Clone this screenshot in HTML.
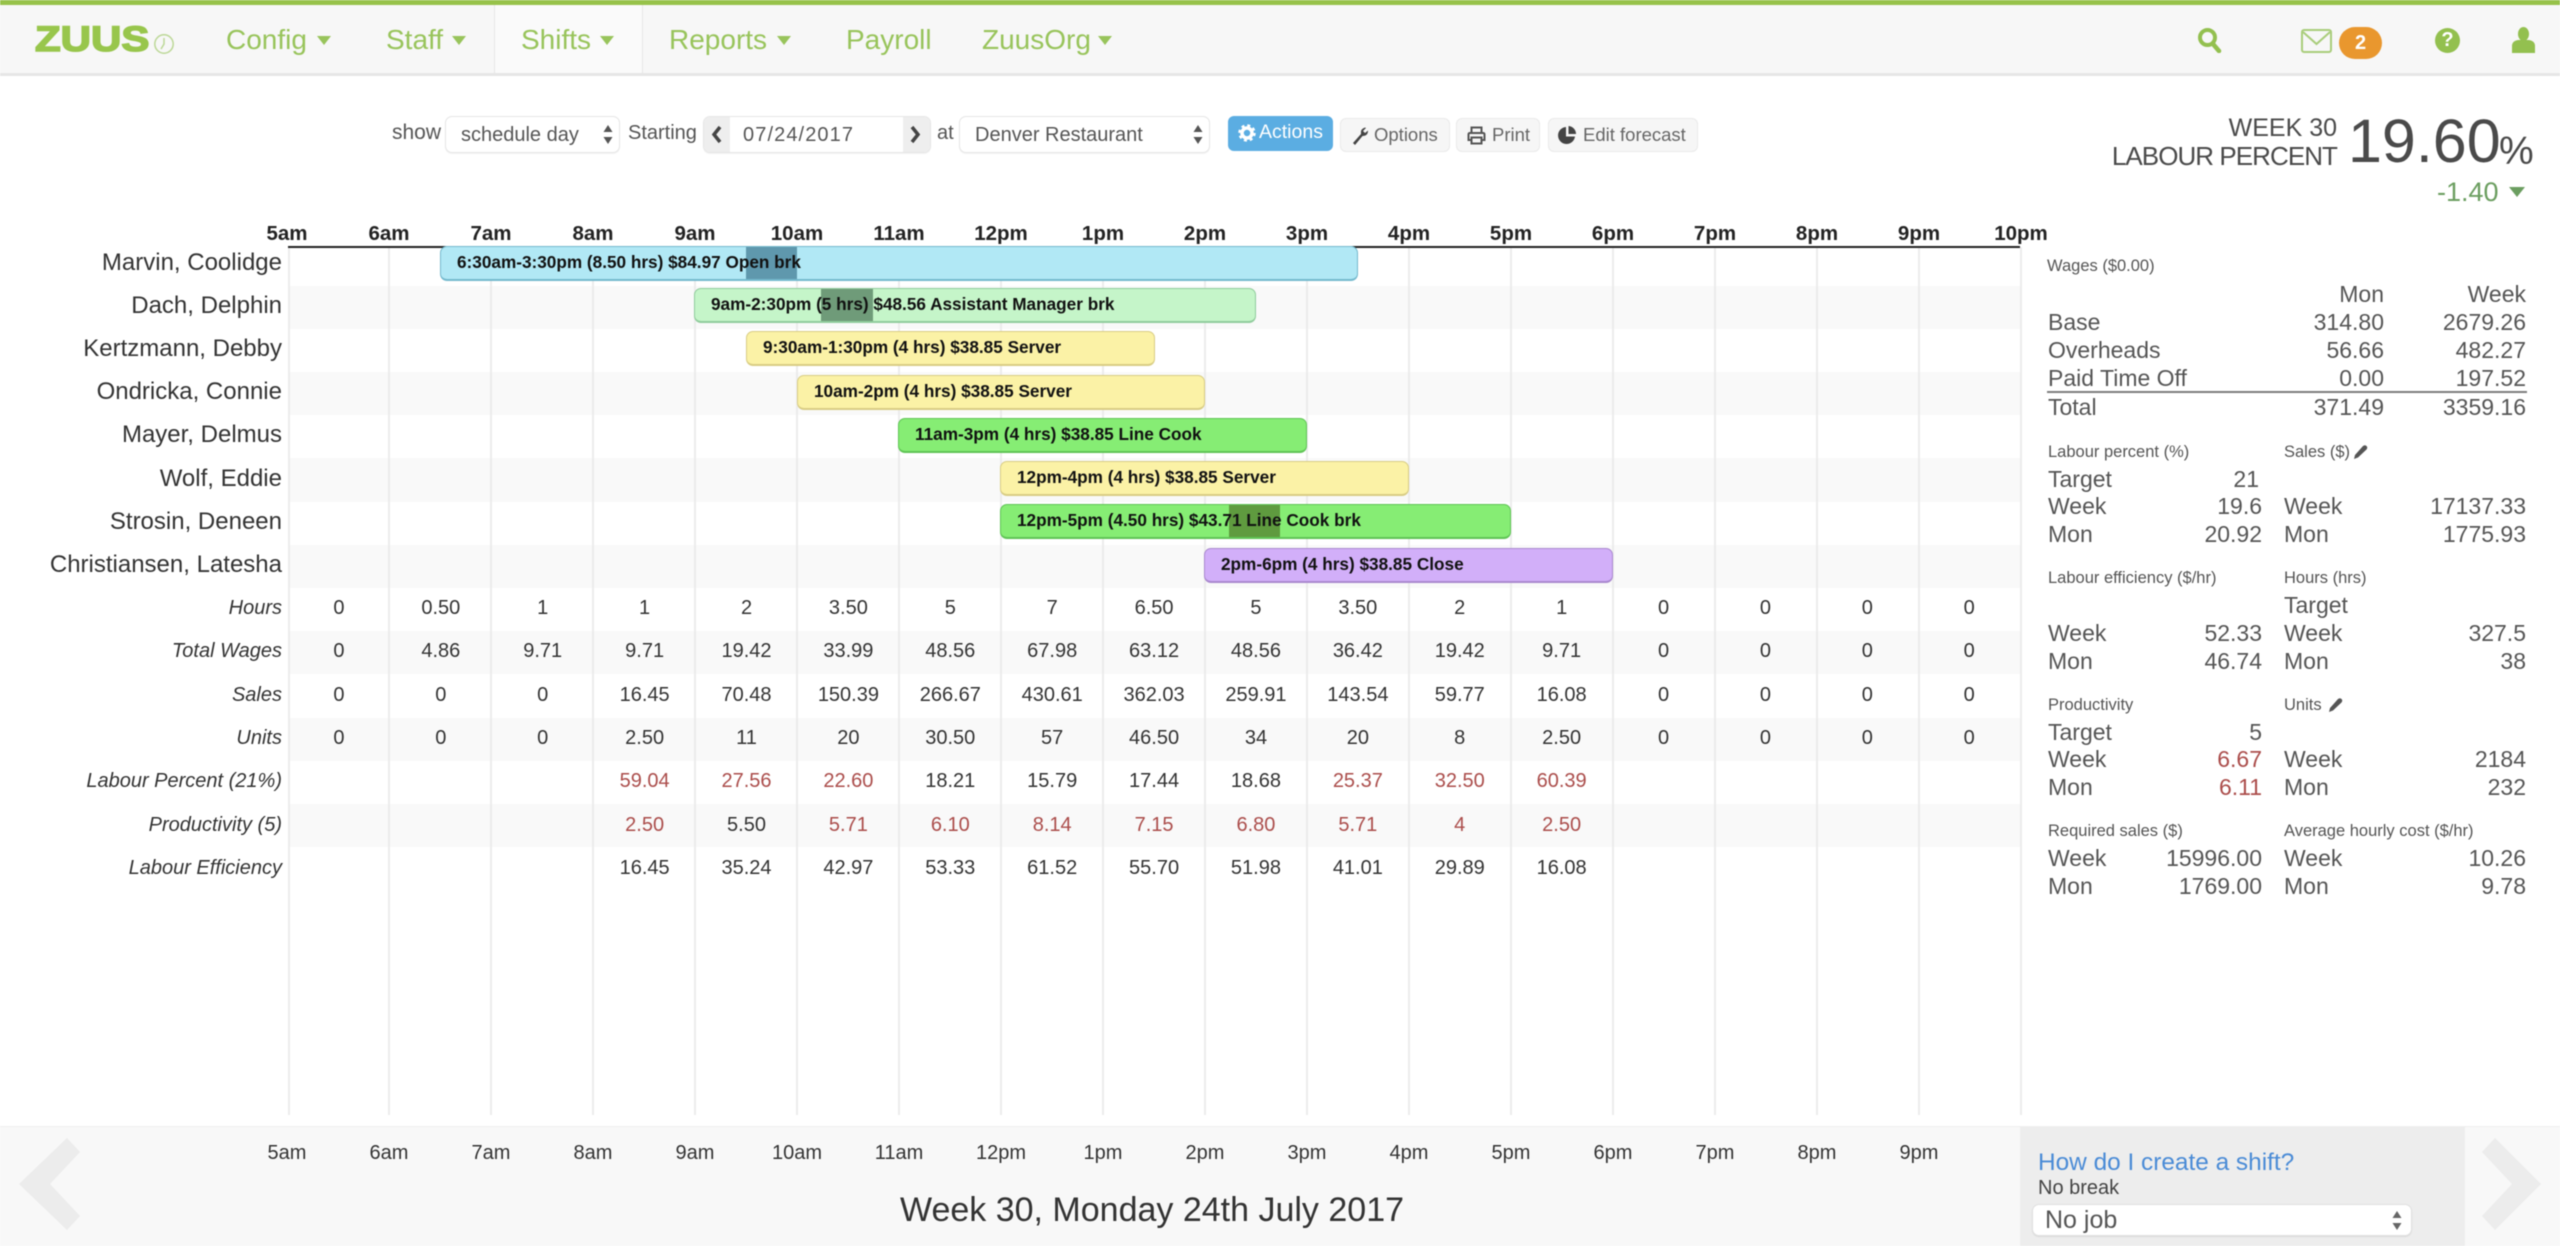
<!DOCTYPE html>
<html lang="en"><head><meta charset="utf-8"><title>Zuus Shifts</title>
<style>
*{box-sizing:border-box}
html,body{margin:0;padding:0;background:#fff}
body{width:2560px;height:1246px;overflow:hidden;position:relative;font-family:"Liberation Sans",Arial,sans-serif;color:#444;filter:blur(.5px)}
.t,.a{position:absolute;white-space:nowrap}
.t{line-height:1}
.r{text-align:right}
.c{text-align:center}
.nav{font-size:28px;color:#98c45b;top:26px}
.car{position:absolute;width:0;height:0;border-left:7.5px solid transparent;border-right:7.5px solid transparent;border-top:9px solid #98c45b;top:36px}
.box{position:absolute;background:#fff;border:1.5px solid #e6e6e6;border-radius:7px;box-shadow:0 1px 1px rgba(0,0,0,.05)}
.fs{font-size:20px;color:#555;top:123px}
.btn{position:absolute;top:118px;height:34px;background:#f6f6f6;border:1.5px solid #eaeaea;border-radius:6px;font-size:18.5px;color:#666;line-height:31px;white-space:nowrap}
.tm{position:absolute;top:224px;width:80px;margin-left:-40px;text-align:center;font-weight:bold;font-size:20.5px;line-height:20px;color:#222}
.ft{position:absolute;top:1143px;width:80px;margin-left:-40px;text-align:center;font-size:20px;line-height:20px;color:#333}
.st{position:absolute;left:288px;width:1733px;height:43.2px;background:#f9f9f9}
.g{position:absolute;top:247px;width:2px;height:868px;background:#ececec}
.n{position:absolute;left:0;width:282px;text-align:right;font-size:24px;line-height:24px;color:#333;white-space:nowrap}
.l{position:absolute;left:0;width:282px;text-align:right;font-size:20px;line-height:20px;font-style:italic;color:#333;white-space:nowrap}
.vals{position:absolute;left:288px;display:flex;font-size:20px;line-height:20px;color:#333}
.vals span{flex:0 0 101.9px;text-align:center;display:block}
.red{color:#ab4d4b!important}
.bar{position:absolute;height:35px;border-radius:7px;border:1.5px solid;border-bottom-width:2.5px;overflow:hidden;font-weight:bold;font-size:17.2px;line-height:31px;color:#111;padding-left:16px;white-space:nowrap}
.bar i{position:absolute;top:-2px;bottom:-3px;display:block}
.bar b{position:relative;font-weight:bold}
.blue{background:#b1e8f5;border-color:#74b9cd}
.lg{background:#c5f5c9;border-color:#90cc9c}
.yl{background:#fbf2a6;border-color:#d9cd84}
.gr{background:#86ed74;border-color:#5fc455}
.pu{background:#d2aff9;border-color:#a988ce}
.h{font-size:16.5px;color:#555;line-height:16px}
.p{font-size:23px;line-height:23px;color:#555}
</style></head><body>

<!-- top nav -->
<div class="a" style="left:0;top:0;width:2560px;height:5px;background:#97c24a"></div>
<div class="a" style="left:0;top:5px;width:2560px;height:68px;background:#f7f7f7"></div>
<div class="a" style="left:0;top:73px;width:2560px;height:3px;background:#e6e6e6"></div>
<div class="a" style="left:494px;top:5px;width:149px;height:68px;background:#fafafa;border-left:1.5px solid #e6e6e6;border-right:1.5px solid #e6e6e6"></div>

<div class="t" style="left:35px;top:22px;font-size:35px;font-weight:bold;color:#98c64c;transform:scaleX(1.2);transform-origin:left top;-webkit-text-stroke:1.5px #98c64c;letter-spacing:0">ZUUS</div>
<svg class="a" style="left:153px;top:33px" width="22" height="22" viewBox="0 0 22 22"><circle cx="11" cy="11" r="9.2" fill="none" stroke="#bcd897" stroke-width="1.5"/><path d="M11 5v6l-3 5" fill="none" stroke="#bcd897" stroke-width="1.5"/></svg>

<div class="t nav" style="left:226px">Config</div><div class="car" style="left:317px"></div>
<div class="t nav" style="left:386px">Staff</div><div class="car" style="left:452px"></div>
<div class="t nav" style="left:521px">Shifts</div><div class="car" style="left:600px"></div>
<div class="t nav" style="left:669px">Reports</div><div class="car" style="left:777px"></div>
<div class="t nav" style="left:846px">Payroll</div>
<div class="t nav" style="left:982px">ZuusOrg</div><div class="car" style="left:1098px"></div>

<svg class="a" style="left:2197px;top:27px" width="25" height="26" viewBox="0 0 25 26"><circle cx="10.5" cy="10.5" r="7.5" fill="none" stroke="#93c04f" stroke-width="4"/><path d="M16 17l6 7" stroke="#93c04f" stroke-width="4.5" stroke-linecap="round"/></svg>
<svg class="a" style="left:2301px;top:29px" width="31" height="24" viewBox="0 0 31 24"><rect x="1" y="1" width="29" height="22" rx="2" fill="#f7f7f7" stroke="#a9cd7b" stroke-width="2"/><path d="M2 3l13.500 12L29 3" fill="none" stroke="#a9cd7b" stroke-width="2"/></svg>
<div class="a" style="left:2339px;top:27px;width:43px;height:32px;border-radius:16px;background:#e9972e;color:#fff;font-weight:bold;font-size:20px;line-height:32px;text-align:center">2</div>
<div class="a" style="left:2435px;top:28px;width:25px;height:25px;border-radius:50%;background:#93c04f;color:#fff;font-weight:bold;font-size:20px;line-height:25px;text-align:center">?</div>
<svg class="a" style="left:2511px;top:27px" width="25" height="26" viewBox="0 0 25 26"><ellipse cx="12.500" cy="7" rx="5.500" ry="7" fill="#93c04f"/><path d="M1 26v-7q0-5 6-6h11q6 1 6 6v7z" fill="#93c04f"/></svg>

<!-- toolbar -->
<div class="t fs" style="left:392px;top:122px;font-size:21px">show</div>
<div class="box" style="left:445px;top:116px;width:175px;height:37px"></div>
<div class="t fs" style="left:461px;top:125px">schedule day</div>
<svg class="a" style="left:603px;top:124px" width="10" height="21" viewBox="0 0 10 21"><path d="M5 1l4.500 7H.5zM5 20l4.500-7H.5z" fill="#555"/></svg>
<div class="t fs" style="left:628px;top:123px">Starting</div>
<div class="box" style="left:703px;top:116px;width:228px;height:37px;overflow:hidden"><div class="a" style="left:0;top:0;width:26px;height:37px;background:#eee"></div><div class="a" style="right:0;top:0;width:27px;height:37px;background:#eee"></div></div>
<svg class="a" style="left:711px;top:125px" width="12" height="19" viewBox="0 0 12 19"><path d="M9 2L3 9.500 9 17" fill="none" stroke="#444" stroke-width="3.500"/></svg>
<svg class="a" style="left:909px;top:125px" width="12" height="19" viewBox="0 0 12 19"><path d="M3 2l6 7.500L3 17" fill="none" stroke="#444" stroke-width="3.500"/></svg>
<div class="t fs" style="left:743px;top:125px;letter-spacing:1.1px">07/24/2017</div>
<div class="t fs" style="left:937px;top:123px">at</div>
<div class="box" style="left:959px;top:116px;width:251px;height:37px"></div>
<div class="t fs" style="left:975px;top:125px">Denver Restaurant</div>
<svg class="a" style="left:1193px;top:124px" width="10" height="21" viewBox="0 0 10 21"><path d="M5 1l4.500 7H.5zM5 20l4.500-7H.5z" fill="#555"/></svg>

<div class="a" style="left:1228px;top:116px;width:105px;height:35px;background:#5bade2;border-radius:6px;color:#fff;font-size:19.5px;line-height:33px;padding-left:31px">Actions</div>
<svg class="a" style="left:1238px;top:124px" width="18" height="18" viewBox="0 0 18 18"><circle cx="9" cy="9" r="5" fill="none" stroke="#fff" stroke-width="3.500"/><circle cx="9" cy="9" r="7.500" fill="none" stroke="#fff" stroke-width="2.500" stroke-dasharray="3 2.900"/></svg>
<div class="btn" style="left:1340px;width:110px;padding-left:33px">Options</div>
<svg class="a" style="left:1351px;top:126px" width="19" height="20" viewBox="0 0 19 20"><path d="M2 17L10 8Q9 3 14 1.500l1 .5-3 3 2 2 3-2.500Q17 10 11.500 10L4 19z" fill="#444"/></svg>
<div class="btn" style="left:1456px;width:84px;padding-left:35px">Print</div>
<svg class="a" style="left:1467px;top:126px" width="19" height="19" viewBox="0 0 19 19"><path d="M4.500 7V1.500h10V7M4.500 14H1.500V8.500q0-1.500 1.500-1.500h13q1.500 0 1.500 1.500V14h-3M4.500 11.500h10v6h-10z" fill="none" stroke="#555" stroke-width="2"/></svg>
<div class="btn" style="left:1548px;width:150px;padding-left:34px">Edit forecast</div>
<svg class="a" style="left:1558px;top:125px" width="19" height="20" viewBox="0 0 19 20"><path d="M8 2a8.500 8.500 0 1 0 9 9.500H8z" fill="#444"/><path d="M10.500 1a8 8 0 0 1 7.500 8h-7.500z" fill="#444"/></svg>

<!-- week summary -->
<div class="t r" style="right:223px;top:116px;font-size:25px;color:#4a4a4a">WEEK 30</div>
<div class="t r" style="right:223px;top:143px;font-size:26px;color:#4a4a4a;letter-spacing:-.95px">LABOUR PERCENT</div>
<div class="t" style="left:2348px;top:111px;font-size:61px;color:#4a4a4a">19.60</div>
<div class="t" style="left:2499px;top:132px;font-size:39px;color:#4a4a4a">%</div>
<div class="t" style="left:2437px;top:179px;font-size:27px;color:#6b9e60">-1.40</div>
<div class="a" style="left:2509px;top:187px;width:0;height:0;border-left:8px solid transparent;border-right:8px solid transparent;border-top:10px solid #6b9e60"></div>

<!-- stripes -->
<div class="st" style="top:285.600px"></div>
<div class="st" style="top:372px"></div>
<div class="st" style="top:458.400px"></div>
<div class="st" style="top:544.800px"></div>
<div class="st" style="top:631.200px"></div>
<div class="st" style="top:717.600px"></div>
<div class="st" style="top:804px"></div>
<!-- grid -->
<div class="g" style="left:288px"></div><div class="g" style="left:388px"></div><div class="g" style="left:490px"></div><div class="g" style="left:592px"></div><div class="g" style="left:694px"></div><div class="g" style="left:796px"></div><div class="g" style="left:898px"></div><div class="g" style="left:1000px"></div><div class="g" style="left:1102px"></div><div class="g" style="left:1204px"></div><div class="g" style="left:1306px"></div><div class="g" style="left:1408px"></div><div class="g" style="left:1510px"></div><div class="g" style="left:1612px"></div><div class="g" style="left:1714px"></div><div class="g" style="left:1816px"></div><div class="g" style="left:1918px"></div><div class="g" style="left:2020px"></div>
<div class="a" style="left:288px;top:246px;width:1732px;height:2px;background:#222"></div>

<!-- time labels -->
<div class="tm" style="left:287px">5am</div><div class="tm" style="left:389px">6am</div><div class="tm" style="left:491px">7am</div><div class="tm" style="left:593px">8am</div><div class="tm" style="left:695px">9am</div><div class="tm" style="left:797px">10am</div><div class="tm" style="left:899px">11am</div><div class="tm" style="left:1001px">12pm</div><div class="tm" style="left:1103px">1pm</div><div class="tm" style="left:1205px">2pm</div><div class="tm" style="left:1307px">3pm</div><div class="tm" style="left:1409px">4pm</div><div class="tm" style="left:1511px">5pm</div><div class="tm" style="left:1613px">6pm</div><div class="tm" style="left:1715px">7pm</div><div class="tm" style="left:1817px">8pm</div><div class="tm" style="left:1919px">9pm</div><div class="tm" style="left:2021px">10pm</div>

<!-- names -->
<div class="n" style="top:251px">Marvin, Coolidge</div>
<div class="n" style="top:294px">Dach, Delphin</div>
<div class="n" style="top:337px">Kertzmann, Debby</div>
<div class="n" style="top:380px">Ondricka, Connie</div>
<div class="n" style="top:423px">Mayer, Delmus</div>
<div class="n" style="top:467px">Wolf, Eddie</div>
<div class="n" style="top:510px">Strosin, Deneen</div>
<div class="n" style="top:553px">Christiansen, Latesha</div>

<!-- shift bars -->
<div class="bar blue" style="left:440px;top:246px;width:918px"><i style="left:305px;width:51px;background:#5f98ad"></i><b>6:30am-3:30pm (8.50 hrs) $84.97 Open brk</b></div>
<div class="bar lg" style="left:694px;top:288px;width:562px"><i style="left:126px;width:52px;background:#6f9b79"></i><b>9am-2:30pm (5 hrs) $48.56 Assistant Manager brk</b></div>
<div class="bar yl" style="left:746px;top:331px;width:409px"><b>9:30am-1:30pm (4 hrs) $38.85 Server</b></div>
<div class="bar yl" style="left:797px;top:375px;width:408px"><b>10am-2pm (4 hrs) $38.85 Server</b></div>
<div class="bar gr" style="left:898px;top:418px;width:409px"><b>11am-3pm (4 hrs) $38.85 Line Cook</b></div>
<div class="bar yl" style="left:1000px;top:461px;width:409px"><b>12pm-4pm (4 hrs) $38.85 Server</b></div>
<div class="bar gr" style="left:1000px;top:504px;width:511px"><i style="left:228px;width:51px;background:#5f9b3f"></i><b>12pm-5pm (4.50 hrs) $43.71 Line Cook brk</b></div>
<div class="bar pu" style="left:1204px;top:548px;width:409px"><b>2pm-6pm (4 hrs) $38.85 Close</b></div>

<!-- stat rows -->
<div class="l" style="top:598px">Hours</div>
<div class="vals" style="top:598px"><span>0</span><span>0.50</span><span>1</span><span>1</span><span>2</span><span>3.50</span><span>5</span><span>7</span><span>6.50</span><span>5</span><span>3.50</span><span>2</span><span>1</span><span>0</span><span>0</span><span>0</span><span>0</span></div>
<div class="l" style="top:641px">Total Wages</div>
<div class="vals" style="top:641px"><span>0</span><span>4.86</span><span>9.71</span><span>9.71</span><span>19.42</span><span>33.99</span><span>48.56</span><span>67.98</span><span>63.12</span><span>48.56</span><span>36.42</span><span>19.42</span><span>9.71</span><span>0</span><span>0</span><span>0</span><span>0</span></div>
<div class="l" style="top:685px">Sales</div>
<div class="vals" style="top:685px"><span>0</span><span>0</span><span>0</span><span>16.45</span><span>70.48</span><span>150.39</span><span>266.67</span><span>430.61</span><span>362.03</span><span>259.91</span><span>143.54</span><span>59.77</span><span>16.08</span><span>0</span><span>0</span><span>0</span><span>0</span></div>
<div class="l" style="top:728px">Units</div>
<div class="vals" style="top:728px"><span>0</span><span>0</span><span>0</span><span>2.50</span><span>11</span><span>20</span><span>30.50</span><span>57</span><span>46.50</span><span>34</span><span>20</span><span>8</span><span>2.50</span><span>0</span><span>0</span><span>0</span><span>0</span></div>
<div class="l" style="top:771px">Labour Percent (21%)</div>
<div class="vals" style="top:771px"><span></span><span></span><span></span><span class="red">59.04</span><span class="red">27.56</span><span class="red">22.60</span><span>18.21</span><span>15.79</span><span>17.44</span><span>18.68</span><span class="red">25.37</span><span class="red">32.50</span><span class="red">60.39</span></div>
<div class="l" style="top:815px">Productivity (5)</div>
<div class="vals" style="top:815px"><span></span><span></span><span></span><span class="red">2.50</span><span>5.50</span><span class="red">5.71</span><span class="red">6.10</span><span class="red">8.14</span><span class="red">7.15</span><span class="red">6.80</span><span class="red">5.71</span><span class="red">4</span><span class="red">2.50</span></div>
<div class="l" style="top:858px">Labour Efficiency</div>
<div class="vals" style="top:858px"><span></span><span></span><span></span><span>16.45</span><span>35.24</span><span>42.97</span><span>53.33</span><span>61.52</span><span>55.70</span><span>51.98</span><span>41.01</span><span>29.89</span><span>16.08</span></div>

<!-- right panel: wages -->
<div class="t h" style="left:2047px;top:258px">Wages ($0.00)</div>
<div class="t p r" style="right:176px;top:283px">Mon</div><div class="t p r" style="right:34px;top:283px">Week</div>
<div class="t p" style="left:2048px;top:311px">Base</div><div class="t p r" style="right:176px;top:311px">314.80</div><div class="t p r" style="right:34px;top:311px">2679.26</div>
<div class="t p" style="left:2048px;top:339px">Overheads</div><div class="t p r" style="right:176px;top:339px">56.66</div><div class="t p r" style="right:34px;top:339px">482.27</div>
<div class="t p" style="left:2048px;top:367px">Paid Time Off</div><div class="t p r" style="right:176px;top:367px">0.00</div><div class="t p r" style="right:34px;top:367px">197.52</div>
<div class="a" style="left:2047px;top:391px;width:480px;height:2px;background:#7d7d7d"></div>
<div class="t p" style="left:2048px;top:396px">Total</div><div class="t p r" style="right:176px;top:396px">371.49</div><div class="t p r" style="right:34px;top:396px">3359.16</div>

<!-- labour percent / sales -->
<div class="t h" style="left:2048px;top:444px">Labour percent (%)</div>
<div class="t h" style="left:2284px;top:444px">Sales ($)</div>
<svg class="a" style="left:2353px;top:444px" width="16" height="16" viewBox="0 0 16 16"><path d="M1 15l1-4 8-9q2-1.500 3.500 0t0 3.500l-8.500 8z" fill="#555"/></svg>
<div class="t p" style="left:2048px;top:468px">Target</div><div class="t p r" style="right:301px;top:468px">21</div>
<div class="t p" style="left:2048px;top:495px">Week</div><div class="t p r" style="right:298px;top:495px">19.6</div><div class="t p" style="left:2284px;top:495px">Week</div><div class="t p r" style="right:34px;top:495px">17137.33</div>
<div class="t p" style="left:2048px;top:523px">Mon</div><div class="t p r" style="right:298px;top:523px">20.92</div><div class="t p" style="left:2284px;top:523px">Mon</div><div class="t p r" style="right:34px;top:523px">1775.93</div>

<!-- labour efficiency / hours -->
<div class="t h" style="left:2048px;top:570px">Labour efficiency ($/hr)</div>
<div class="t h" style="left:2284px;top:570px">Hours (hrs)</div>
<div class="t p" style="left:2284px;top:594px">Target</div>
<div class="t p" style="left:2048px;top:622px">Week</div><div class="t p r" style="right:298px;top:622px">52.33</div><div class="t p" style="left:2284px;top:622px">Week</div><div class="t p r" style="right:34px;top:622px">327.5</div>
<div class="t p" style="left:2048px;top:650px">Mon</div><div class="t p r" style="right:298px;top:650px">46.74</div><div class="t p" style="left:2284px;top:650px">Mon</div><div class="t p r" style="right:34px;top:650px">38</div>

<!-- productivity / units -->
<div class="t h" style="left:2048px;top:697px">Productivity</div>
<div class="t h" style="left:2284px;top:697px">Units</div>
<svg class="a" style="left:2328px;top:697px" width="16" height="16" viewBox="0 0 16 16"><path d="M1 15l1-4 8-9q2-1.500 3.500 0t0 3.500l-8.500 8z" fill="#555"/></svg>
<div class="t p" style="left:2048px;top:721px">Target</div><div class="t p r" style="right:298px;top:721px">5</div>
<div class="t p" style="left:2048px;top:748px">Week</div><div class="t p r red" style="right:298px;top:748px">6.67</div><div class="t p" style="left:2284px;top:748px">Week</div><div class="t p r" style="right:34px;top:748px">2184</div>
<div class="t p" style="left:2048px;top:776px">Mon</div><div class="t p r red" style="right:298px;top:776px">6.11</div><div class="t p" style="left:2284px;top:776px">Mon</div><div class="t p r" style="right:34px;top:776px">232</div>

<!-- required sales / avg cost -->
<div class="t h" style="left:2048px;top:823px">Required sales ($)</div>
<div class="t h" style="left:2284px;top:823px">Average hourly cost ($/hr)</div>
<div class="t p" style="left:2048px;top:847px">Week</div><div class="t p r" style="right:298px;top:847px">15996.00</div><div class="t p" style="left:2284px;top:847px">Week</div><div class="t p r" style="right:34px;top:847px">10.26</div>
<div class="t p" style="left:2048px;top:875px">Mon</div><div class="t p r" style="right:298px;top:875px">1769.00</div><div class="t p" style="left:2284px;top:875px">Mon</div><div class="t p r" style="right:34px;top:875px">9.78</div>

<!-- footer -->
<div class="a" style="left:0;top:1126px;width:2560px;height:120px;background:#f8f8f8;border-top:1.500px solid #eeeeee"></div>
<svg class="a" style="left:0;top:1126px" width="100" height="120" viewBox="0 1126 100 120"><path d="M67 1138 80 1152 50 1184 80 1216 67 1230 19 1184z" fill="#ececec"/></svg>
<svg class="a" style="left:2470px;top:1126px" width="90" height="120" viewBox="2470 1126 90 120"><path d="M2495 1138 2482 1152 2512 1184 2482 1216 2495 1230 2541 1184z" fill="#ececec"/></svg>
<div class="ft" style="left:287px">5am</div><div class="ft" style="left:389px">6am</div><div class="ft" style="left:491px">7am</div><div class="ft" style="left:593px">8am</div><div class="ft" style="left:695px">9am</div><div class="ft" style="left:797px">10am</div><div class="ft" style="left:899px">11am</div><div class="ft" style="left:1001px">12pm</div><div class="ft" style="left:1103px">1pm</div><div class="ft" style="left:1205px">2pm</div><div class="ft" style="left:1307px">3pm</div><div class="ft" style="left:1409px">4pm</div><div class="ft" style="left:1511px">5pm</div><div class="ft" style="left:1613px">6pm</div><div class="ft" style="left:1715px">7pm</div><div class="ft" style="left:1817px">8pm</div><div class="ft" style="left:1919px">9pm</div>
<div class="t c" style="left:852px;width:600px;top:1193px;font-size:34px;color:#333">Week 30, Monday 24th July 2017</div>

<div class="a" style="left:2020px;top:1127px;width:445px;height:119px;background:#ededed"></div>
<div class="t" style="left:2038px;top:1151px;font-size:24.4px;color:#4a8bd6">How do I create a shift?</div>
<div class="t" style="left:2038px;top:1178px;font-size:20px;color:#444">No break</div>
<div class="a" style="left:2032px;top:1204px;width:380px;height:32px;background:#fff;border:1.500px solid #e0e0e0;border-radius:7px;box-shadow:0 1px 1px rgba(0,0,0,.08)"></div>
<div class="t" style="left:2045px;top:1208px;font-size:25px;color:#555">No job</div>
<svg class="a" style="left:2392px;top:1210px" width="10" height="21" viewBox="0 0 10 21"><path d="M5 1l4.500 7H.5zM5 20l4.500-7H.5z" fill="#666"/></svg>

</body></html>
